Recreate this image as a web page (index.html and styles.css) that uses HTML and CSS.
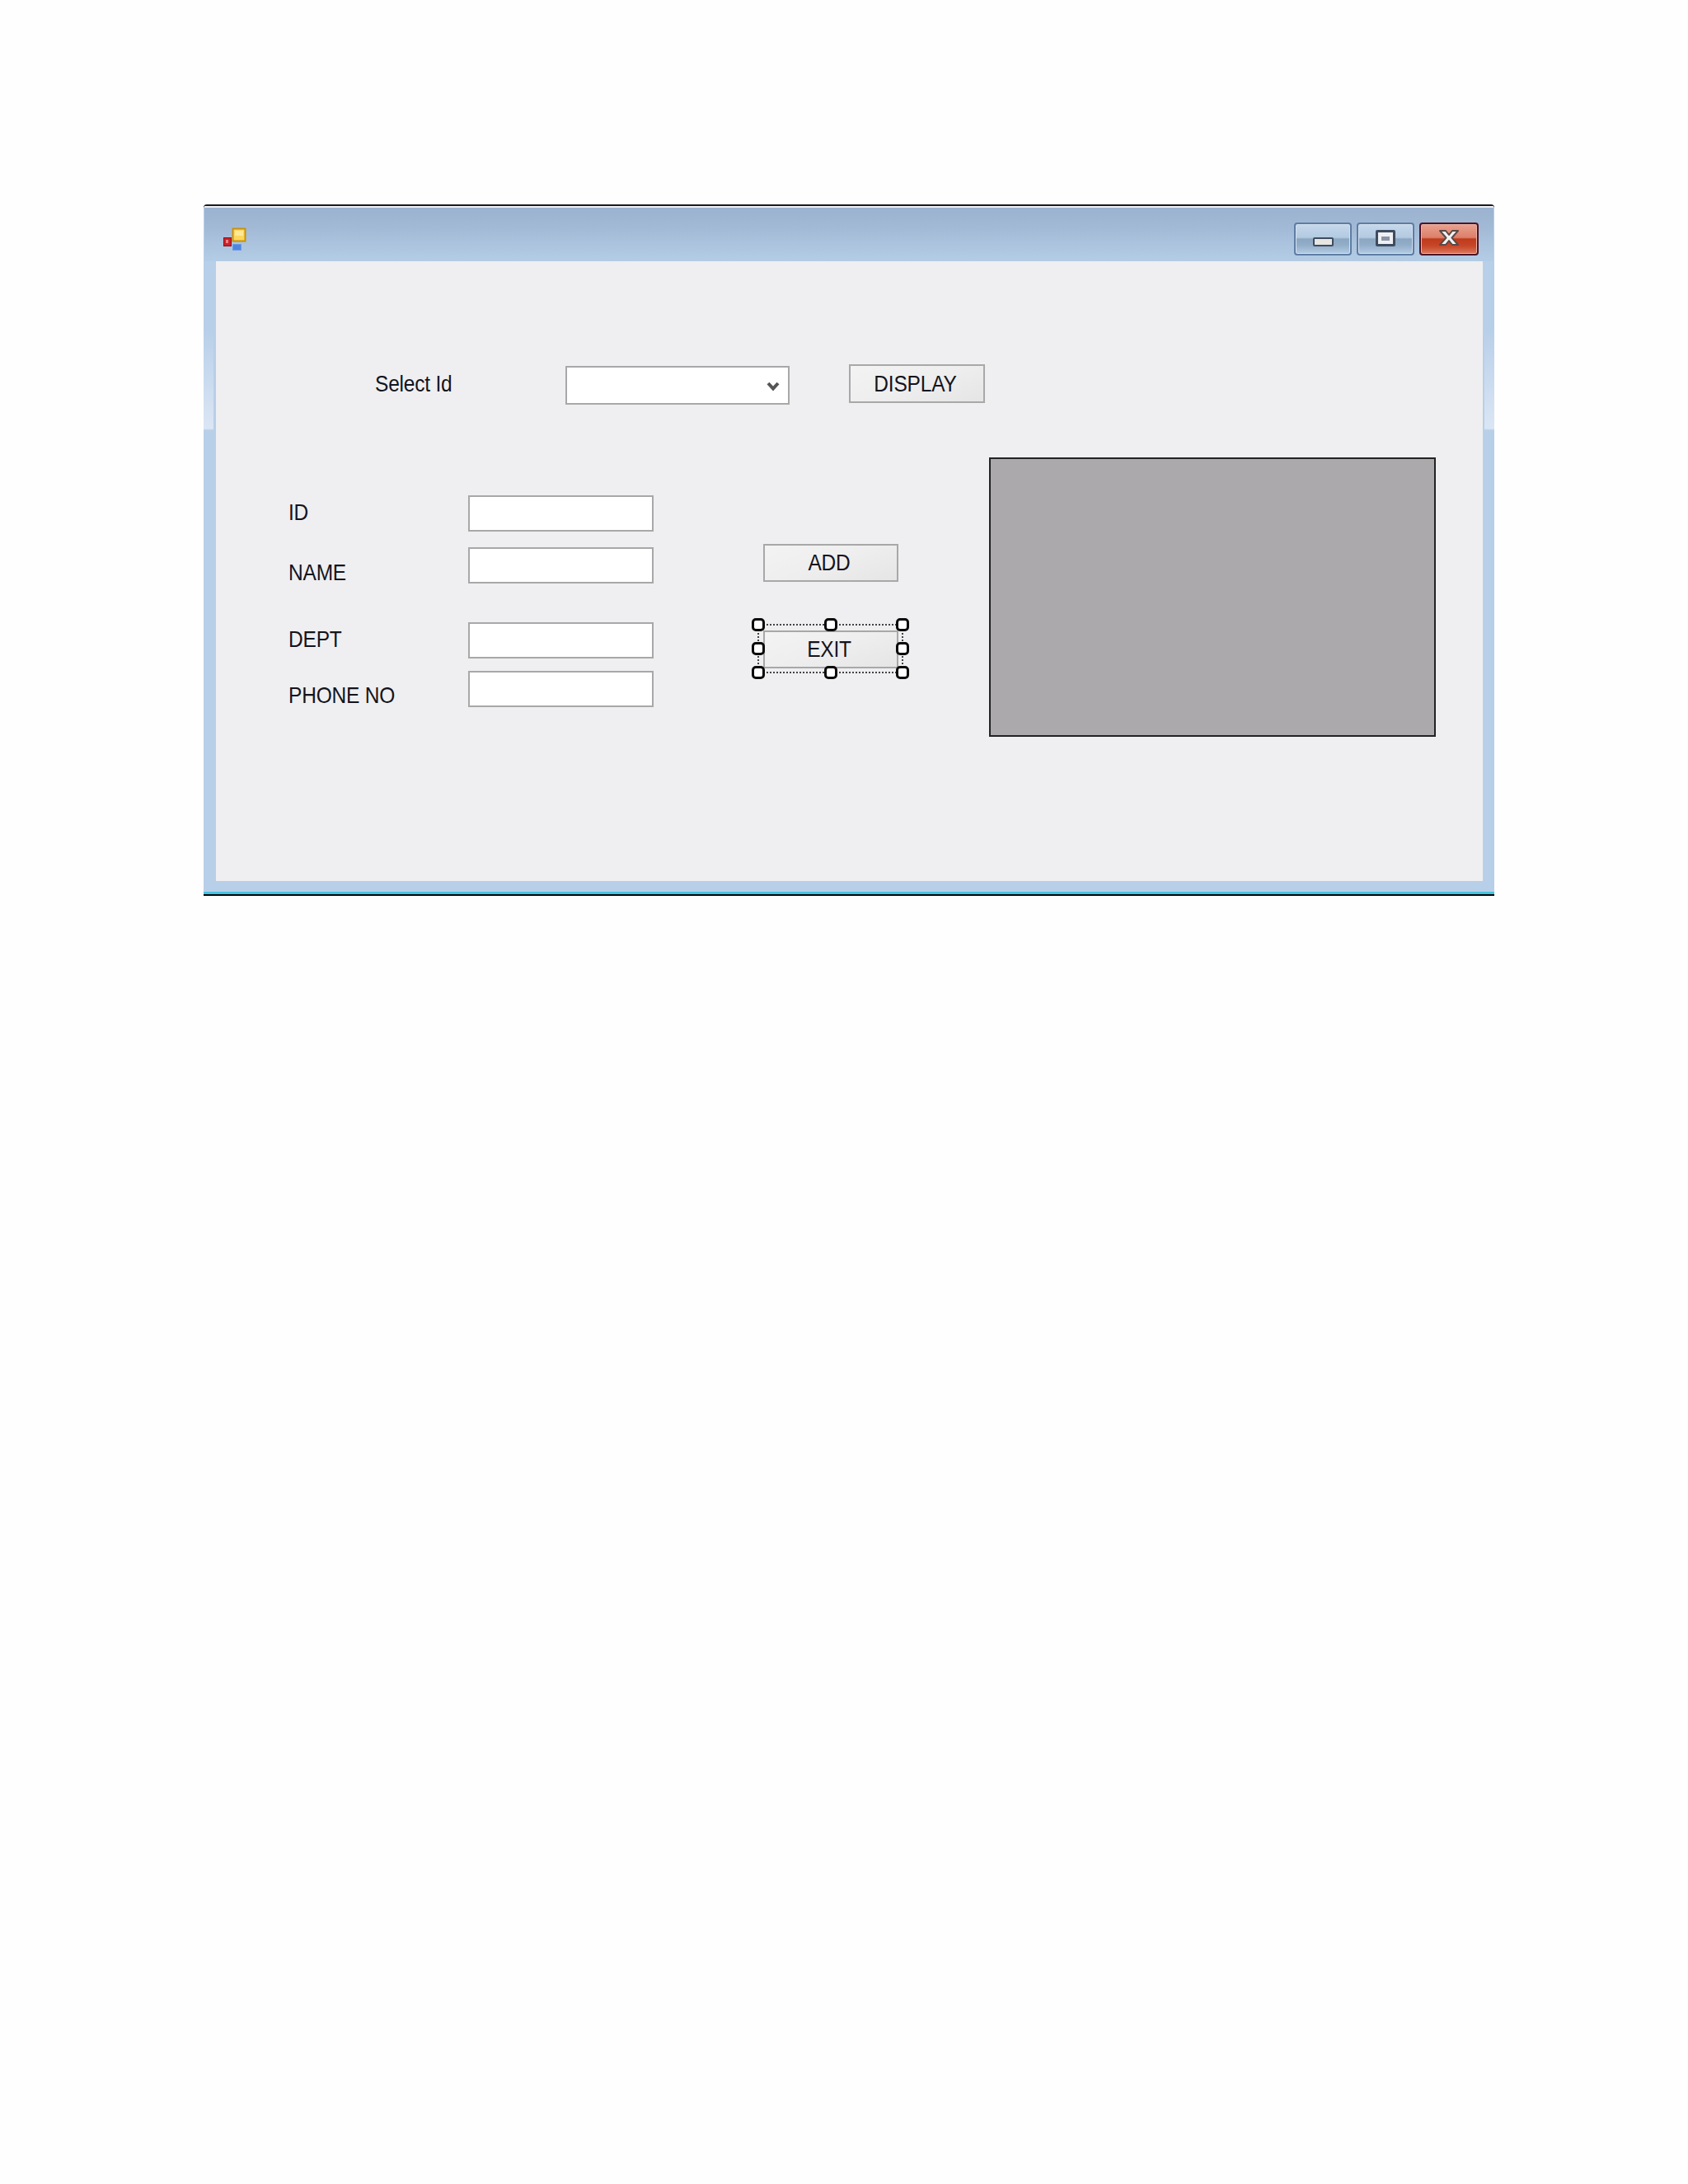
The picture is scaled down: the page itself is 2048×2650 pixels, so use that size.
FILE: index.html
```html
<!DOCTYPE html>
<html lang="en">
<head>
<meta charset="utf-8">
<title>Form1</title>
<link rel="stylesheet" href="styles.css">
</head>
<body>
<div class="window">
  <header class="titlebar">
    <svg class="app-icon" width="32" height="30" viewBox="0 0 32 30">
      <rect x="14.5" y="1.5" width="15" height="15" fill="#fbd75e" stroke="#c8920c" stroke-width="2"/>
      <rect x="17" y="4" width="10" height="6" fill="#fde79a"/>
      <rect x="3.5" y="12.5" width="9" height="10" fill="#c9222a" stroke="#8a1218"/>
      <rect x="6" y="15" width="3" height="4" fill="#ee8080"/>
      <rect x="14.5" y="20.5" width="10" height="7" fill="#4f86e0" stroke="#6d9ae4"/>
    </svg>
    <div class="caption-buttons">
      <div class="cap-btn cap-min"><span class="glyph-min"></span></div>
      <div class="cap-btn cap-max"><span class="glyph-max"><span class="glyph-max-in"></span></span></div>
      <div class="cap-btn cap-close">
        <svg class="glyph-x" width="26" height="21" viewBox="0 0 26 21">
          <path d="M2 2 H9 L13 7 L17 2 H24 L16.5 10.5 L24 19 H17 L13 14 L9 19 H2 L9.5 10.5 Z" fill="#f2f2f2" stroke="#5a4a48" stroke-width="2" stroke-linejoin="round"/>
        </svg>
      </div>
    </div>
  </header>
  <main class="client">
    <div class="row-select">
      <span class="label label-select">Select Id</span>
      <div class="combo">
        <svg class="combo-arrow" width="16" height="14" viewBox="0 0 16 14">
          <path d="M2 3 L8 9.5 L14 3" fill="none" stroke="#555" stroke-width="4"/>
        </svg>
      </div>
      <button class="btn btn-display" type="button"><span class="btn-text">DISPLAY</span></button>
    </div>
    <div class="row-main">
      <div class="labels">
        <span class="label label-id">ID</span>
        <span class="label label-name">NAME</span>
        <span class="label label-dept">DEPT</span>
        <span class="label label-phone">PHONE NO</span>
      </div>
      <div class="inputs">
        <input class="field" type="text">
        <input class="field field-name" type="text">
        <input class="field field-dept" type="text">
        <input class="field field-phone" type="text">
      </div>
      <div class="actions">
        <button class="btn" type="button"><span class="btn-text">ADD</span></button>
        <div class="selected">
          <button class="btn" type="button"><span class="btn-text">EXIT</span></button>
          <div class="sel-frame">
            <i class="handle h-tl"></i><i class="handle h-tc"></i><i class="handle h-tr"></i>
            <i class="handle h-ml"></i><i class="handle h-mr"></i>
            <i class="handle h-bl"></i><i class="handle h-bc"></i><i class="handle h-br"></i>
          </div>
        </div>
      </div>
      <div class="picture"></div>
    </div>
  </main>
</div>
</body>
</html>
```
FILE: styles.css
```css
html, body {
  margin: 0;
  background: #fefefe;
}
body {
  height: 2650px;
  padding: 248px 0 0 247px;
  box-sizing: border-box;
  overflow: hidden;
  font-family: "Liberation Sans", Arial, sans-serif;
  color: #14141c;
}
.window {
  width: 1566px;
  height: 839px;
  box-sizing: border-box;
  display: flex;
  flex-direction: column;
  border-top: 2px solid #1a1a1a;
  border-bottom: 2px solid #050505;
  border-radius: 4px 4px 0 0;
  box-shadow: inset 0 -3px 0 #45c2e2;
  background:
    linear-gradient(to bottom, rgba(222, 233, 246, 0) 150px, #dbe6f4 270px, rgba(222, 233, 246, 0) 272px) left top / 12px 100% no-repeat,
    linear-gradient(to bottom, rgba(222, 233, 246, 0) 150px, #dbe6f4 270px, rgba(222, 233, 246, 0) 272px) right top / 12px 100% no-repeat,
    #b8cfe9;
}
.titlebar {
  height: 67px;
  box-sizing: border-box;
  margin: 0 1px;
  padding: 18px 18px 0 20px;
  display: flex;
  justify-content: space-between;
  align-items: flex-start;
  border-top: 2px solid #eef2f7;
  background: linear-gradient(to bottom, #9bb2d0 0, #a3bad6 25px, #b4cde6 100%);
}
.app-icon {
  margin-top: 6px;
}
.caption-buttons {
  display: flex;
  gap: 6px;
}
.cap-btn {
  width: 70px;
  height: 40px;
  box-sizing: border-box;
  display: flex;
  align-items: center;
  justify-content: center;
  border: 2px solid #5e7da3;
  border-radius: 4px;
  box-shadow: inset 0 0 0 1px #d3e1f0;
  background: linear-gradient(to bottom, #c6d8eb 0, #b3cae1 45%, #8ba6c1 50%, #92adc8 70%, #b4cce4 100%);
}
.cap-close {
  width: 72px;
  border-color: #4c1526;
  box-shadow: inset 0 0 0 1px #eeb4a4;
  background: linear-gradient(to bottom, #e9a28f 0, #dc806a 45%, #bf3a1a 50%, #c8482a 75%, #dc7a5e 100%);
}
.glyph-min {
  width: 25px;
  height: 11px;
  box-sizing: border-box;
  margin-top: 7px;
  border: 2px solid #3f4b60;
  border-radius: 2px;
  background: #e6e6e2;
}
.glyph-max {
  width: 24px;
  height: 20px;
  box-sizing: border-box;
  margin-top: -2px;
  display: flex;
  align-items: center;
  justify-content: center;
  border: 3px solid #3f4b60;
  border-radius: 2px;
  background: #eef0f2;
}
.glyph-max-in {
  width: 10px;
  height: 5px;
  background: #8d93a8;
}
.glyph-x {
  margin-top: -3px;
}
.client {
  flex: 1;
  margin: 0 14px 16px 15px;
  padding-top: 125px;
  background: #efeff1;
}
.label {
  display: block;
  font-size: 24.5px;
  line-height: 30px;
  letter-spacing: -0.2px;
  white-space: nowrap;
  transform: scaleY(1.12);
}
.row-select {
  display: flex;
  align-items: flex-start;
  padding-left: 193px;
}
.label-select {
  width: 231px;
  margin-top: 9px;
}
.combo {
  width: 272px;
  height: 47px;
  margin-top: 2px;
  box-sizing: border-box;
  position: relative;
  border: 2px solid #a8a8a8;
  background: #fff;
}
.combo-arrow {
  position: absolute;
  right: 10px;
  top: 16px;
}
.btn {
  display: block;
  width: 164px;
  height: 46px;
  padding: 0 4px 0 0;
  box-sizing: border-box;
  border: 2px solid #a8a8a8;
  border-radius: 0;
  background: linear-gradient(160deg, #f3f3f4 0, #eeeeef 50%, #e5e5e6 100%);
  font-family: inherit;
  font-size: 24.5px;
  letter-spacing: -0.2px;
  color: #14141c;
}
.btn-text {
  display: inline-block;
  transform: scaleY(1.12);
}
.btn-display {
  width: 165px;
  height: 47px;
  margin-left: 72px;
}
.row-main {
  display: flex;
  align-items: flex-start;
  margin-top: 64px;
  padding-left: 88px;
}
.labels {
  width: 218px;
  padding-top: 52px;
}
.label-name {
  margin-top: 43px;
}
.label-dept {
  margin-top: 51px;
}
.label-phone {
  margin-top: 38px;
}
.inputs {
  display: flex;
  flex-direction: column;
  padding-top: 46px;
}
.field {
  display: block;
  width: 225px;
  height: 44px;
  margin: 0;
  padding: 0;
  box-sizing: border-box;
  border: 2px solid #a8a8a8;
  border-radius: 0;
  background: #fff;
}
.field-name {
  margin-top: 19px;
}
.field-dept {
  margin-top: 47px;
}
.field-phone {
  margin-top: 15px;
}
.actions {
  width: 164px;
  margin-left: 133px;
  padding-top: 105px;
}
.selected {
  position: relative;
  margin-top: 59px;
}
.sel-frame {
  position: absolute;
  left: -7px;
  right: -6px;
  top: -8px;
  bottom: -6px;
  border: 2px dotted #444;
}
.handle {
  position: absolute;
  width: 16px;
  height: 16px;
  box-sizing: border-box;
  border: 3px solid #0a0a0a;
  border-radius: 5px;
  background: #fff;
}
.h-tl { left: -9px; top: -9px; }
.h-tc { left: calc(50% - 8px); top: -9px; }
.h-tr { right: -9px; top: -9px; }
.h-ml { left: -9px; top: calc(50% - 8px); }
.h-mr { right: -9px; top: calc(50% - 8px); }
.h-bl { left: -9px; bottom: -9px; }
.h-bc { left: calc(50% - 8px); bottom: -9px; }
.h-br { right: -9px; bottom: -9px; }
.picture {
  width: 542px;
  height: 339px;
  margin-left: 110px;
  box-sizing: border-box;
  border: 2px solid #222;
  background: #aba9ab;
}
```
